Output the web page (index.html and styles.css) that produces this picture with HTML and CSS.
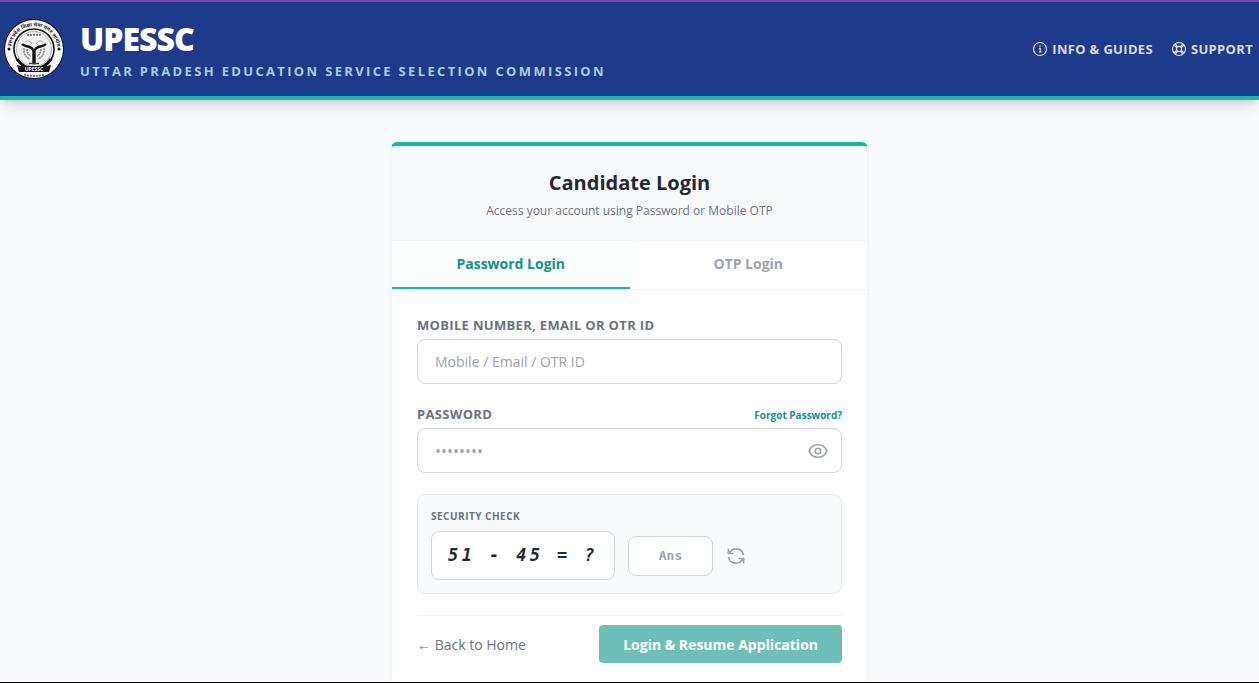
FILE: index.html
```
<!DOCTYPE html>
<html lang="en">
<head>
  <meta charset="UTF-8">
  <meta name="viewport" content="width=device-width, initial-scale=1.0">
  <title>UPESSC - Candidate Login</title>
  <link rel="stylesheet" href="styles.css">
</head>

<body>
  <div class="page">
    <header class="site-header">
      <div class="brand">
        <svg class="logo" viewBox="0 0 60 60" aria-hidden="true">
          <defs>
            <path id="ringTop" d="M7.500 35A23 23 0 1 1 52.500 35"/>
          </defs>
          <circle cx="30" cy="30" r="30" fill="#111"/>
          <circle cx="30" cy="30" r="29" fill="#fafafa"/>
          <circle cx="30" cy="30" r="20" fill="#fafafa" stroke="#111" stroke-width="1.6"/>
          <path d="M13 40A20 20 0 0 0 47 40" fill="none" stroke="#111" stroke-width="3"/>
          <circle cx="30" cy="30" r="17.5" fill="#f0f0f0" stroke="#888" stroke-width="0.6"/>
          <text class="logo-ring"><textPath href="#ringTop" startOffset="50%" text-anchor="middle">उत्तर प्रदेश शिक्षा सेवा चयन आयोग</textPath></text>
          <circle cx="5" cy="30" r="1.5" fill="#111"/>
          <circle cx="55" cy="30" r="1.5" fill="#111"/>
          <!-- emblem -->
          <path d="M23 16h14" stroke="#888" stroke-width="2" stroke-dasharray="2 1"/>
          <path d="M20 29q-1 8 6 11M40 29q1 8-6 11M23 30q0 5 4 7M37 30q0 5-4 7" fill="none" stroke="#888" stroke-width="1.6" stroke-dasharray="2 0.6"/>
          <path d="M18 25C22 29 28 26 29.500 32V44h1V32C32 26 38 29 42 25" fill="none" stroke="#111" stroke-width="2.4"/>
          <path d="M21 23q4-3 7 2M39 23q-4-3-7 2" fill="none" stroke="#aaa" stroke-width="1"/>
          <path d="M25 44.500h10" stroke="#444" stroke-width="1.4"/>
          <path d="M13 46l4 1h26l4-1-2 7H15z" fill="#111"/>
          <text class="logo-name" x="30" y="51.5" text-anchor="middle">UPESSC</text>
          <path d="M20 55.500q10 3 20 0" fill="none" stroke="#666" stroke-width="1.8" stroke-dasharray="2 1"/>
        </svg>
        <div class="brand-text">
          <h1>UPESSC</h1>
          <p>Uttar Pradesh Education Service Selection Commission</p>
        </div>
      </div>
      <nav class="site-nav">
        <a href="#">
          <svg class="nav-icon" viewBox="0 0 16 16" aria-hidden="true">
            <circle cx="8" cy="8" r="6.5"/>
            <path d="M7 7.300h1.200v3.400M7 10.900h2.400M8 4.500v1.200"/>
          </svg>
          Info &amp; Guides
        </a>
        <a href="#">
          <svg class="nav-icon" viewBox="0 0 16 16" aria-hidden="true">
            <circle cx="8" cy="8" r="6.5"/>
            <circle cx="8" cy="8" r="2.600"/>
            <path d="M3 4.200L6 6.800M4.200 3l2.600 3M13 4.200L10 6.800M11.800 3L9.200 6M3 11.800L6 9.200M4.200 13l2.600-3M13 11.800L10 9.200M11.800 13L9.200 10"/>
          </svg>
          Support
        </a>
      </nav>
    </header>

    <main class="content">
      <div class="card">
        <div class="card-header">
          <h2>Candidate Login</h2>
          <p>Access your account using Password or Mobile OTP</p>
        </div>

        <div class="tabs">
          <button type="button" class="tab active">Password Login</button>
          <button type="button" class="tab">OTP Login</button>
        </div>

        <form class="card-body">
          <div class="field">
            <label for="userId">Mobile Number, Email or OTR ID</label>
            <input type="text" id="userId" class="input" placeholder="Mobile / Email / OTR ID">
          </div>

          <div class="field">
            <div class="label-row">
              <label for="password">Password</label>
              <a href="#" class="forgot">Forgot Password?</a>
            </div>
            <div class="password-box">
              <input type="password" id="password" class="input password-input" placeholder="••••••••">
              <button type="button" class="icon-btn eye-btn" aria-label="Show password">
                <svg viewBox="0 0 24 24" aria-hidden="true">
                  <path d="M1.500 12C3 7 7 4.500 12 4.500S21 7 22.500 12C21 17 17 19.500 12 19.500S3 17 1.500 12z"/>
                  <circle cx="12" cy="12" r="3.300"/>
                </svg>
              </button>
            </div>
          </div>

          <div class="captcha">
            <label for="answer">Security Check</label>
            <div class="captcha-row">
              <div class="captcha-text">51 - 45 = ?</div>
              <input type="text" id="answer" class="answer" placeholder="Ans">
              <button type="button" class="icon-btn" aria-label="Refresh">
                <svg viewBox="0 0 24 24" aria-hidden="true">
                  <path d="M3 3v6h6M3.800 9A9 9 0 0 1 21 11M21 21v-6h-6M20.200 15A9 9 0 0 1 3 13"/>
                </svg>
              </button>
            </div>
          </div>

          <div class="actions">
            <a href="#" class="back">← Back to Home</a>
            <button type="submit" class="submit" disabled>Login &amp; Resume Application</button>
          </div>
        </form>
      </div>
    </main>
  </div>
</body>
</html>
```
FILE: styles.css
```
* {
  margin: 0;
  padding: 0;
  box-sizing: border-box;
}

body {
  font-family: 'Segoe UI', 'Open Sans', sans-serif;
  background: #f9fafb;
  color: #1f2937;
}

a {
  text-decoration: none;
}

button,
input {
  font-family: inherit;
}

.page {
  height: 100vh;
  display: flex;
  flex-direction: column;
  overflow: hidden;
  border-top: 2px solid #7e3fb0;
  border-bottom: 1px solid #000;
}

/* header */
.site-header {
  display: flex;
  flex-shrink: 0;
  justify-content: space-between;
  align-items: center;
  padding: 15px 6px 15px 4px;
  background: #1e3a8a;
  border-bottom: 4px solid #14b8a6;
  box-shadow: 0 10px 15px -3px rgba(0, 0, 0, 0.1), 0 4px 6px -2px rgba(0, 0, 0, 0.1);
}

.brand {
  display: flex;
  align-items: center;
  gap: 16px;
}

.logo {
  width: 60px;
  height: 60px;
}

.logo-ring {
  font-family: 'Noto Sans', sans-serif;
  font-size: 5px;
  font-weight: bold;
  fill: #222;
}

.logo-name {
  font-size: 5px;
  font-weight: bold;
  fill: #fff;
}

.brand-text {
  padding-top: 4px;
}

.brand-text h1 {
  font-size: 32px;
  line-height: 36px;
  font-weight: 800;
  letter-spacing: -1px;
  color: #fff;
}

.brand-text p {
  margin-top: 4px;
  font-size: 13px;
  line-height: 20px;
  font-weight: 700;
  letter-spacing: 0.18em;
  text-transform: uppercase;
  color: #a5cfdc;
}

.site-nav {
  display: flex;
  gap: 18px;
}

.site-nav a {
  display: flex;
  align-items: center;
  gap: 4px;
  font-size: 13px;
  line-height: 20px;
  font-weight: 700;
  letter-spacing: 0.025em;
  text-transform: uppercase;
  color: #d6dfea;
}

.nav-icon {
  width: 16px;
  height: 16px;
  fill: none;
  stroke: currentColor;
  stroke-width: 1.2;
}

/* login card */
.content {
  padding: 42px 16px;
}

.card {
  max-width: 477px;
  margin: 0 auto;
  background: #fff;
  border: 1px solid #f3f4f6;
  border-top: 4px solid #14b8a6;
  border-radius: 6px;
  box-shadow: 0 1px 3px rgba(0, 0, 0, 0.08);
  overflow: hidden;
}

.card-header {
  padding: 23px 24px 19px;
  background: #f9fafb;
  border-bottom: 1px solid #f3f4f6;
  text-align: center;
}

.card-header h2 {
  font-size: 20px;
  line-height: 28px;
  font-weight: 700;
}

.card-header p {
  margin-top: 4px;
  font-size: 12px;
  line-height: 20px;
  color: #6b7280;
}

.tabs {
  display: flex;
  border-bottom: 1px solid #f3f4f6;
}

.tab {
  flex: 1;
  height: 48px;
  padding-bottom: 2px;
  background: #fff;
  border: none;
  border-bottom: 2px solid #fff;
  font-size: 14px;
  font-weight: 700;
  color: #9ca3af;
  cursor: pointer;
}

.tab.active {
  background: #fafffd;
  border-bottom-color: #14b8a6;
  color: #0d9488;
}

.card-body {
  padding: 26px 25px;
}

.field {
  margin-bottom: 21px;
}

.field label {
  display: block;
  font-size: 13px;
  line-height: 19px;
  font-weight: 700;
  letter-spacing: 0.025em;
  text-transform: uppercase;
  color: #6b7280;
}

.label-row {
  display: flex;
  justify-content: space-between;
  align-items: center;
}

.forgot {
  font-size: 10px;
  line-height: 18px;
  font-weight: 700;
  color: #0d9488;
}

.input {
  display: block;
  width: 100%;
  height: 45px;
  margin-top: 4px;
  padding: 0 17px;
  border: 1px solid #d1d5db;
  border-radius: 8px;
  background: #fff;
  font-size: 14px;
  color: #1f2937;
}

.password-input {
  font-size: 16px;
}

.input::placeholder,
.answer::placeholder {
  color: #9ca3af;
  opacity: 1;
}

.password-box {
  position: relative;
}

.icon-btn {
  width: 20px;
  height: 20px;
  background: none;
  border: none;
  color: #9ca3af;
  cursor: pointer;
}

.icon-btn svg {
  display: block;
  width: 100%;
  height: 100%;
  fill: none;
  stroke: currentColor;
  stroke-width: 2;
}

.eye-btn {
  position: absolute;
  top: 50%;
  right: 14px;
  transform: translateY(-50%);
}

.captcha {
  padding: 13px;
  background: #f9fafb;
  border: 1px solid #e5e7eb;
  border-radius: 8px;
}

.captcha label {
  display: block;
  font-size: 10px;
  line-height: 16px;
  font-weight: 700;
  letter-spacing: 0.05em;
  text-transform: uppercase;
  color: #6b7280;
}

.captcha-row {
  display: flex;
  align-items: center;
  gap: 13px;
  margin-top: 7px;
}

.captcha-text {
  padding: 0 16px;
  border: 1px solid #d1d5db;
  border-radius: 8px;
  background: #fff;
  font-family: Consolas, 'DejaVu Sans Mono', monospace;
  font-size: 17px;
  line-height: 47px;
  font-weight: 700;
  font-style: italic;
  letter-spacing: 0.2em;
}

.answer {
  width: 85px;
  height: 40px;
  border: 1px solid #d1d5db;
  border-radius: 8px;
  background: #fff;
  font-family: Consolas, 'DejaVu Sans Mono', monospace;
  font-size: 13px;
  font-weight: 700;
  text-align: center;
}

.actions {
  display: flex;
  justify-content: space-between;
  align-items: center;
  margin-top: 21px;
  padding-top: 9px;
  border-top: 1px solid #f3f4f6;
}

.back {
  font-size: 14px;
  color: #6b7280;
}

.submit {
  padding: 0 24px;
  height: 38px;
  background: #6ebfb8;
  border: none;
  border-radius: 4px;
  font-size: 14px;
  font-weight: 700;
  color: #fff;
}

@media (max-width: 700px) {
  .site-header {
    flex-wrap: wrap;
    gap: 12px;
  }
  .brand-text p {
    letter-spacing: 1px;
  }
}
```
